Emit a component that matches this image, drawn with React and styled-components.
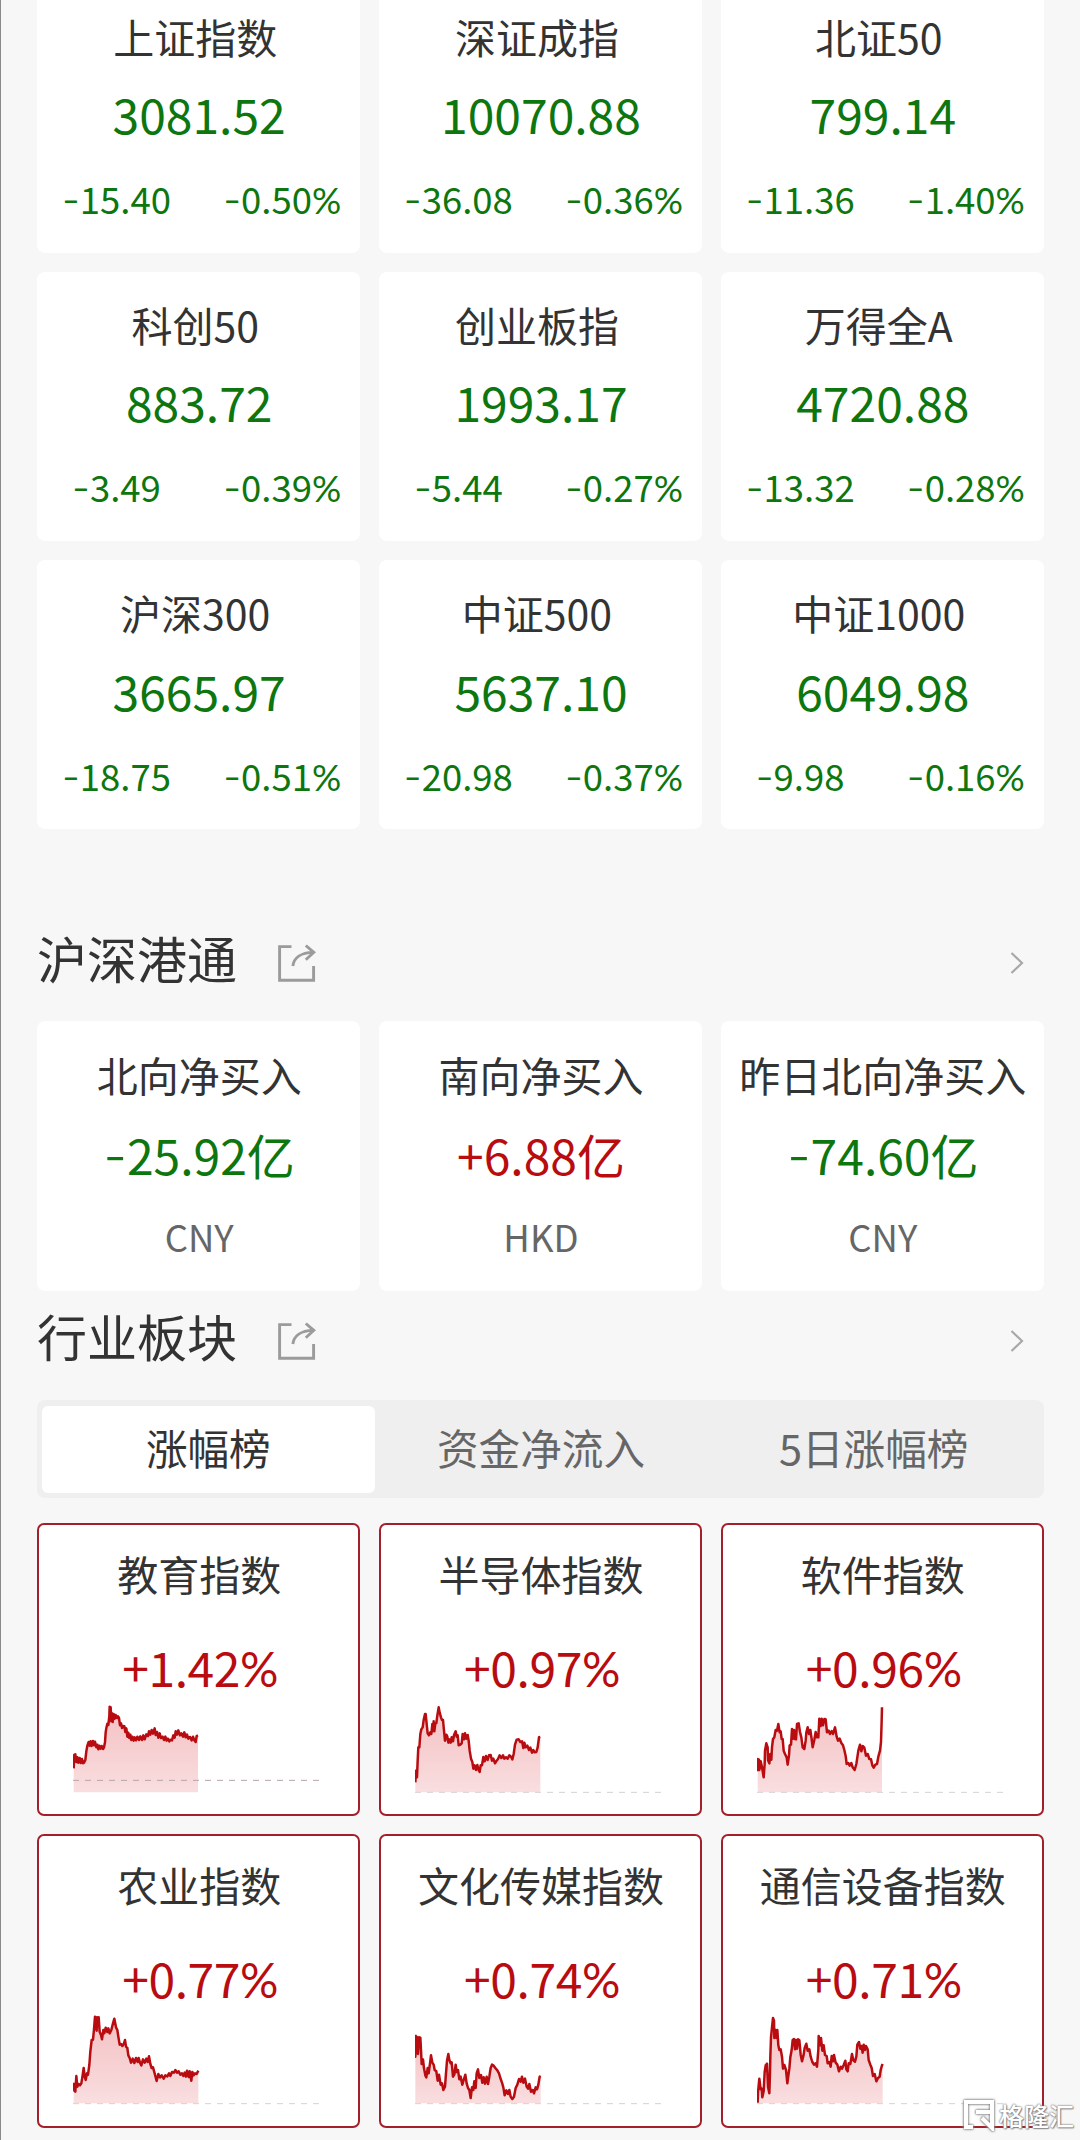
import styled, { createGlobalStyle } from "styled-components";

const GREEN = "#0d760e";
const RED = "#b90c10";

const GlobalStyle = createGlobalStyle`
  * {
    box-sizing: border-box;
  }
  body {
    margin: 0;
    background: #f7f7f7;
  }
`;

const Page = styled.div`
  position: relative;
  width: 1080px;
  height: 2140px;
  overflow: hidden;
  padding: 0 36px;
  border-left: 1px solid #8a8a8a;
  background: #f7f7f7;
  color: #333;
  font-family: "Noto Sans CJK SC", sans-serif;
`;

const Grid = styled.div`
  display: grid;
  grid-template-columns: repeat(3, 1fr);
  grid-auto-rows: ${(p) => p.$row}px;
  gap: 18.5px;
  margin-top: ${(p) => p.$top || 0}px;
`;

const Card = styled.div`
  background: #fff;
  border-radius: 8px;
  padding: 28.5px 0 0 1px;
  text-align: center;
  white-space: nowrap;
`;

const SectorCard = styled(Card)`
  border: 2px solid #a3202a;
  border-radius: 7px;
  padding-top: 24px;
`;

const CardTitle = styled.div`
  font-size: 41px;
  line-height: 48px;
  padding-right: ${(p) => p.$shift || 0}px;
`;

const Value = styled.div`
  font-size: 48px;
  line-height: 56px;
  margin-top: ${(p) => p.$top}px;
  color: ${(p) => (p.$up ? RED : GREEN)};
`;

const SectorValue = styled(Value)`
  padding-left: 2px;
  letter-spacing: -0.4px;
`;

const Changes = styled.div`
  display: grid;
  grid-template-columns: 157px 1fr;
  margin-top: 36px;
  font-size: 36.5px;
  line-height: 44px;
  color: ${GREEN};
`;

const Percent = styled.div`
  padding-left: 9px;
`;

const Currency = styled.div`
  margin-top: 33px;
  font-size: 36.5px;
  line-height: 44px;
  color: #666;
`;

const Sign = styled.span`
  font-family: Inter, sans-serif;
  font-size: 1.08em;
  font-weight: 300;
  line-height: 1;
`;

const PercentSign = styled.span`
  font-family: Lato, sans-serif;
  line-height: 1;
`;

const Heading = styled.div`
  display: flex;
  align-items: center;
  height: 60px;
  margin-top: ${(p) => p.$top}px;
  padding-right: 20.5px;
  font-size: 50px;
  line-height: 60px;
`;

const ShareIcon = styled.svg`
  width: 39px;
  height: 39px;
  margin: 13px auto 0 40px;
`;

const Chevron = styled.svg`
  width: 14px;
  height: 24px;
  margin-top: 12px;
`;

const Tabs = styled.div`
  display: grid;
  grid-template-columns: repeat(3, 1fr);
  height: 98px;
  margin-top: 35px;
  padding: 6px 4px 5px 5px;
  border-radius: 8px;
  background: #efefef;
`;

const Tab = styled.div`
  border-radius: 6px;
  background: ${(p) => (p.$active ? "#fff" : "transparent")};
  color: ${(p) => (p.$active ? "#333" : "#666")};
  font-size: 41.6px;
  line-height: 83px;
  text-align: center;
`;

const Spark = styled.svg`
  display: block;
  width: 250px;
  height: 92px;
  margin: 10px 0 0 33px;
`;

const Watermark = styled.div`
  position: absolute;
  right: 6px;
  bottom: 9px;
  display: flex;
  align-items: center;
  gap: 4px;
  color: #fff;
  font-size: 25px;
  font-weight: 500;
  line-height: 30px;
  text-shadow: 0 0 2px #777, 0 0 2px #888, 1px 1px 1px #999;
`;

const WatermarkLogo = styled.svg`
  width: 32px;
  height: 32px;
  filter: drop-shadow(0 0 1px #777) drop-shadow(0 0 1px #999);
`;

const indices = [
  { name: "上证指数", value: "3081.52", change: "-15.40", percent: "-0.50%" },
  { name: "深证成指", value: "10070.88", change: "-36.08", percent: "-0.36%" },
  { name: "北证50", value: "799.14", change: "-11.36", percent: "-1.40%" },
  { name: "科创50", value: "883.72", change: "-3.49", percent: "-0.39%" },
  { name: "创业板指", value: "1993.17", change: "-5.44", percent: "-0.27%" },
  { name: "万得全A", value: "4720.88", change: "-13.32", percent: "-0.28%" },
  { name: "沪深300", value: "3665.97", change: "-18.75", percent: "-0.51%" },
  { name: "中证500", value: "5637.10", change: "-20.98", percent: "-0.37%" },
  { name: "中证1000", value: "6049.98", change: "-9.98", percent: "-0.16%" },
];

const flows = [
  { name: "北向净买入", value: "-25.92亿", currency: "CNY" },
  { name: "南向净买入", value: "+6.88亿", currency: "HKD", up: true },
  { name: "昨日北向净买入", value: "-74.60亿", currency: "CNY" },
];

// x0 / y0: where the line's own coordinates start, base: the dashed previous close
const sectors = [
  {
    name: "教育指数",
    percent: "+1.42%",
    x0: 128,
    y0: 220,
    base: 449,
    line: "130,413 132,372 135,371 138,394 141,380 144,396 148,382 151,397 155,385 158,398 161,396 165,388 168,362 171,345 175,334 178,345 181,332 184,346 188,331 191,344 194,333 198,350 201,342 204,356 207,345 211,354 214,346 218,355 221,350 224,335 226,305 228,292 231,279 234,283 237,256 238,228 241,230 243,272 245,248 247,274 250,250 253,264 256,253 260,262 263,257 266,262 269,284 272,278 275,292 278,286 282,287 285,304 288,293 291,318 294,306 297,322 300,312 303,328 306,318 310,330 313,320 317,329 321,318 326,328 330,317 335,328 339,314 343,326 348,311 353,316 356,302 360,312 364,298 368,309 373,293 376,313 380,304 384,321 388,308 392,322 397,318 401,328 405,318 409,330 413,324 417,332 421,327 425,329 429,314 433,321 436,302 440,312 444,299 449,314 453,308 458,318 462,305 466,320 470,312 474,324 479,319 484,329 488,318 492,329 496,334 499,316 503,314",
  },
  {
    name: "半导体指数",
    percent: "+0.97%",
    x0: 135,
    y0: 220,
    base: 485,
    line: "136,455 138,420 141,440 143,390 145,350 148,350 151,310 154,296 158,290 161,268 165,250 167,250 170,280 173,308 177,314 181,305 184,310 187,280 189,301 191,272 193,302 196,278 199,277 202,254 206,230 209,246 213,260 216,268 219,268 222,300 225,330 229,312 232,318 235,336 238,326 242,336 245,320 249,332 252,313 257,302 260,318 263,314 266,344 271,342 275,338 278,310 282,326 285,308 289,324 293,313 296,330 299,360 303,384 307,394 310,414 314,404 318,418 322,403 325,416 329,424 332,404 336,404 340,379 344,392 348,376 353,388 357,374 362,373 366,390 370,384 375,398 380,390 384,385 389,374 394,382 399,374 403,384 408,380 413,384 418,374 423,378 427,386 431,370 435,342 440,327 446,326 451,334 456,332 460,352 463,336 467,350 472,345 477,358 481,351 486,366 490,358 494,365 499,364 503,350 507,320 511,319",
  },
  {
    name: "软件指数",
    percent: "+0.96%",
    x0: 140,
    y0: 220,
    base: 485,
    line: "142,422 142,385 146,387 147,418 151,392 155,410 160,440 163,400 164,360 168,338 172,350 173,388 177,398 180,370 183,387 185,350 188,325 192,320 196,298 200,300 204,280 208,305 211,302 214,325 217,325 220,360 224,370 229,380 232,402 236,374 238,344 242,342 245,295 248,324 251,298 254,325 257,326 260,280 265,278 269,304 273,320 277,350 282,355 286,330 288,306 292,290 296,310 300,298 304,325 307,350 312,327 316,304 320,320 324,320 327,264 331,286 334,264 338,284 342,265 346,266 350,305 355,300 359,310 364,301 368,310 374,290 379,318 383,330 388,324 393,337 398,344 402,358 406,376 409,400 414,397 418,405 423,397 427,410 433,418 438,400 441,380 444,360 449,342 453,362 457,346 462,351 467,375 472,370 477,385 482,386 486,404 490,411 495,402 500,400 504,378 509,360 512,334 514,270 515,230",
  },
  {
    name: "农业指数",
    percent: "+0.77%",
    x0: 128,
    y0: 225,
    base: 491,
    line: "130,428 132,452 135,455 138,408 141,440 145,432 149,436 153,430 156,412 160,384 163,410 166,420 170,400 173,404 177,375 180,335 184,300 188,299 191,268 194,230 199,272 200,232 203,258 205,232 208,275 212,285 215,298 219,270 222,280 226,263 231,276 234,265 238,280 243,270 248,250 252,236 257,262 261,270 265,296 268,314 272,312 276,318 281,310 284,300 287,320 291,324 294,346 298,354 302,368 307,356 312,369 317,354 322,366 325,354 329,368 333,376 338,358 343,368 348,356 352,366 356,349 360,372 364,384 368,382 373,400 379,423 384,402 389,412 394,406 400,416 405,406 411,409 416,400 420,408 425,396 431,398 435,390 440,398 445,394 450,404 455,400 459,408 463,398 467,410 470,392 475,411 478,394 483,422 486,396 490,406 494,400 499,402 504,392",
  },
  {
    name: "文化传媒指数",
    percent: "+0.74%",
    x0: 135,
    y0: 225,
    base: 491,
    line: "136,284 136,350 140,290 144,342 147,292 151,293 153,330 155,372 159,358 162,385 166,406 169,412 173,384 176,400 180,370 183,346 187,368 191,374 194,390 199,394 203,422 207,404 212,434 216,430 220,450 225,440 228,400 231,362 235,342 238,360 242,370 245,367 249,410 253,404 257,374 260,396 264,390 268,418 272,410 277,434 281,420 286,404 290,430 294,444 298,450 302,474 306,442 310,450 313,424 317,444 320,400 324,388 328,414 333,405 337,428 341,412 345,431 350,410 354,432 358,410 362,384 366,374 371,377 376,384 382,391 387,400 391,414 396,428 400,442 404,466 409,451 414,462 418,450 422,470 427,477 432,470 437,444 442,434 447,417 452,425 456,410 460,428 465,416 470,440 474,446 478,432 483,455 488,450 492,460 497,442 501,448 505,434 509,410 512,408",
  },
  {
    name: "通信设备指数",
    percent: "+0.71%",
    x0: 140,
    y0: 225,
    base: 491,
    line: "142,488 143,458 147,416 151,448 154,446 156,472 160,454 163,396 166,376 170,371 173,440 177,460 179,400 180,350 182,292 185,262 188,234 191,242 192,294 196,270 199,294 201,270 204,316 207,330 211,328 215,350 218,386 222,375 227,390 231,430 235,400 237,386 240,352 244,330 247,300 251,297 254,328 257,300 260,326 263,298 267,300 271,344 275,364 280,344 283,324 288,311 292,332 297,328 301,350 306,366 311,374 316,370 320,380 324,330 325,288 329,316 332,294 336,332 340,316 344,345 349,348 352,370 357,366 361,380 364,348 368,364 371,345 376,368 381,374 386,394 391,380 395,386 400,375 405,362 408,388 412,394 415,370 420,372 425,342 429,361 434,365 438,350 441,314 446,306 450,326 453,318 457,338 460,314 464,330 467,318 472,328 475,360 480,374 484,384 488,408 493,402 498,424 503,414 508,410 511,390 515,376 517,372",
  },
];

// Signs come from other families, the CJK font draws them too narrow or too wide
const Amount = ({ text }) => {
  const minus = text.startsWith("-");
  const percent = text.endsWith("%");
  return (
    <>
      {minus && <Sign>-</Sign>}
      {text.slice(minus ? 1 : 0, percent ? -1 : undefined)}
      {percent && <PercentSign>%</PercentSign>}
    </>
  );
};

const SectionHeading = ({ title, top }) => (
  <Heading $top={top}>
    {title}
    <ShareIcon viewBox="0 0 39 39" fill="none" stroke="#9b9b9b" strokeWidth="2.9">
      <path d="M14.5 2.6H2.6V36.2H36.6V22" />
      <path d="M15.8 22C17 14 24 8.6 36 8.4M28.8 1.5L36.8 8.4L28.8 15.8" />
    </ShareIcon>
    <Chevron viewBox="0 0 14 24" fill="none" stroke="#a8a8a8" strokeWidth="2.2">
      <path d="M1.5 2L12 12L1.5 22" />
    </Chevron>
  </Heading>
);

const Sparkline = ({ sector, id }) => {
  const { x0, y0, base, line } = sector;
  const bottom = y0 + 265;
  const points = line.split(" ");
  const first = points[0].split(",")[0];
  const last = points[points.length - 1].split(",")[0];
  return (
    <Spark viewBox={`${x0} ${y0} 750 276`}>
      <defs>
        <linearGradient id={id} x1="0" y1="0" x2="0" y2="1">
          <stop offset="0" stopColor="#f4c0c2" />
          <stop offset="1" stopColor="#f9dee0" />
        </linearGradient>
      </defs>
      <polygon points={`${first},${bottom} ${line} ${last},${bottom}`} fill={`url(#${id})`} />
      <path
        d={`M${x0} ${base}H${x0 + 739}`}
        stroke={base < bottom - 10 ? "#b5a5a7" : "#d6d2d3"}
        strokeWidth="3"
        strokeDasharray="18 18"
      />
      <polyline points={line} fill="none" stroke={RED} strokeWidth="7.5" strokeLinejoin="round" />
    </Spark>
  );
};

const App = () => {
  return (
    <Page>
      <GlobalStyle />
      <Grid $row={269.6} $top={-16.5}>
        {indices.map((item) => (
          <Card key={item.name}>
            <CardTitle $shift={8}>{item.name}</CardTitle>
            <Value $top={25.4}>{item.value}</Value>
            <Changes>
              <div>
                <Amount text={item.change} />
              </div>
              <Percent>
                <Amount text={item.percent} />
              </Percent>
            </Changes>
          </Card>
        ))}
      </Grid>

      <SectionHeading title="沪深港通" top={97.7} />
      <Grid $row={269.6} $top={34.3}>
        {flows.map((item) => (
          <Card key={item.name}>
            <CardTitle>{item.name}</CardTitle>
            <Value $top={27.8} $up={item.up}>
              <Amount text={item.value} />
            </Value>
            <Currency>{item.currency}</Currency>
          </Card>
        ))}
      </Grid>

      <SectionHeading title="行业板块" top={13.7} />
      <Tabs>
        <Tab $active>涨幅榜</Tab>
        <Tab>资金净流入</Tab>
        <Tab>5日涨幅榜</Tab>
      </Tabs>
      <Grid $row={293.4} $top={25}>
        {sectors.map((sector, i) => (
          <SectorCard key={sector.name}>
            <CardTitle>{sector.name}</CardTitle>
            <SectorValue $top={41} $up>
              <Amount text={sector.percent} />
            </SectorValue>
            <Sparkline sector={sector} id={`fill${i}`} />
          </SectorCard>
        ))}
      </Grid>

      <Watermark>
        <WatermarkLogo viewBox="0 0 32 32" fill="none" stroke="#fff" strokeWidth="4">
          <path d="M10 28H3V3H29V11M13 13H29V29L19 19" />
        </WatermarkLogo>
        格隆汇
      </Watermark>
    </Page>
  );
};

export default App;
